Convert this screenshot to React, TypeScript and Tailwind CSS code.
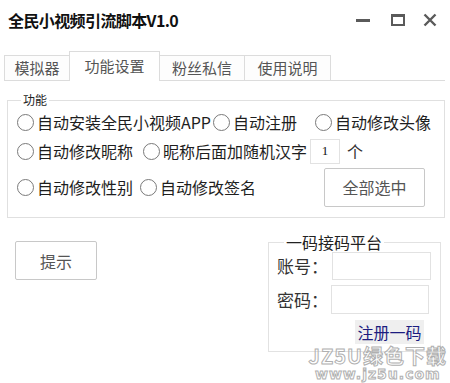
import type { ReactNode } from 'react'

const font = "font-['Noto_Sans_CJK_SC','Microsoft_YaHei',sans-serif]"

function Radio({ label, className = '' }: { label: string; className?: string }) {
  return (
    <label className={`flex items-center shrink-0 ${className}`}>
      <span className="w-[17px] h-[17px] rounded-full border border-[#7a7a7a] bg-white shrink-0" />
      <span className="ml-[3px] text-[16px] leading-[20px] text-[#1e1e1e] whitespace-nowrap">{label}</span>
    </label>
  )
}

function Row({ children, className = '' }: { children: ReactNode; className?: string }) {
  return <div className={`flex items-center ${className}`}>{children}</div>
}

const tabs = [
  { name: '模拟器', w: 'w-[66px]' },
  { name: '功能设置', w: 'w-[91px]' },
  { name: '粉丝私信', w: 'w-[86px]' },
  { name: '使用说明', w: 'w-[87px]' },
]

export default function App() {
  return (
    <div className={`relative w-[450px] h-[383px] bg-white overflow-hidden ${font}`}>
      {/* title bar */}
      <div className="flex items-center h-[40px] pl-[8px]">
        <span className="text-[16px] font-bold text-[#111] tracking-[-0.6px]">全民小视频引流脚本V1.0</span>
        <div className="ml-auto flex items-center">
          <span className="w-[14px] h-[3px] bg-[#5a5a5a]" />
          <span className="ml-[21px] w-[14px] h-[12px] border-2 border-t-[3px] border-[#5a5a5a]" />
          <svg className="ml-[18px] mr-[13px]" width="14" height="14" viewBox="0 0 14 14">
            <path d="M1.5 1.5l11 11M12.5 1.5l-11 11" stroke="#5a5a5a" strokeWidth="2.4" />
          </svg>
        </div>
      </div>

      {/* tabs */}
      <div className="mt-[12px] ml-[4px] mr-[5px] flex items-end h-[29px] border-b border-[#dcdcdc]">
        {tabs.map((t, i) => (
          <div
            key={t.name}
            className={`${t.w} flex items-center justify-center border border-b-0 border-[#dcdcdc] text-[15px] text-[#555] ${
              i === 1 ? 'h-[30px] -mb-px bg-white' : 'h-[25px] bg-[#fdfdfd]'
            } ${i > 0 ? '-ml-px' : ''}`}
          >
            {t.name}
          </div>
        ))}
      </div>

      {/* 功能 group */}
      <fieldset className="mt-[11px] ml-[7px] mr-[5px] border border-[#e0e0e0] pb-[10px]">
        <legend className="ml-[13px] px-[2px] text-[12px] leading-[16px] text-[#222]">功能</legend>
        <Row className="h-[26px] mt-px pl-[9px]">
          <Radio label="自动安装全民小视频APP" className="w-[196px]" />
          <Radio label="自动注册" className="w-[102px]" />
          <Radio label="自动修改头像" />
        </Row>
        <Row className="h-[26px] mt-[3px] pl-[9px]">
          <Radio label="自动修改昵称" className="w-[126px]" />
          <Radio label="昵称后面加随机汉字" />
          <span className="ml-[3px] w-[30px] h-[25px] border border-[#e2e2e2] flex items-center justify-center text-[13px] text-[#111] font-['Liberation_Serif',serif]">
            1
          </span>
          <span className="ml-[7px] text-[16px] text-[#333]">个</span>
        </Row>
        <Row className="h-[40px] mt-[3px] pl-[9px]">
          <Radio label="自动修改性别" className="w-[123px]" />
          <Radio label="自动修改签名" className="w-[184px]" />
          <button className="w-[101px] h-[39px] border border-[#c8c8c8] rounded-[2px] bg-white text-[16px] text-[#555]">
            全部选中
          </button>
        </Row>
      </fieldset>

      {/* bottom area */}
      <div className="flex items-start pl-[15px] pr-[9px]">
        <button className="mt-[23px] w-[82px] h-[39px] border border-[#c8c8c8] rounded-[2px] bg-white text-[16px] text-[#555]">
          提示
        </button>
        <fieldset className="ml-auto mt-[14px] w-[173px] border border-[#e2e2e2] pb-[7px]">
          <legend className="ml-[15px] px-[2px] text-[16px] leading-[20px] text-[#222]">一码接码平台</legend>
          <div className="flex items-center pl-[8px]">
            <span className="w-[55px] text-[17px] text-[#333]">账号：</span>
            <span className="w-[99px] h-[28px] border border-[#e2e2e2] bg-white" />
          </div>
          <div className="flex items-center pl-[8px] mt-[5px]">
            <span className="w-[54px] text-[17px] text-[#333]">密码：</span>
            <span className="w-[98px] h-[29px] border border-[#e2e2e2] bg-white" />
          </div>
          <div className="flex justify-end pr-[16px] mt-[6px]">
            <button className="w-[69px] h-[24px] leading-[24px] bg-[#efefef] text-[16px] text-[#1c1c80]">注册一码</button>
          </div>
        </fieldset>
      </div>

      {/* watermark */}
      <div className="absolute right-[3px] bottom-[1px] flex flex-col items-center gap-[1px] font-['DejaVu_Sans',sans-serif] text-transparent [-webkit-text-stroke:1px_#b0b0b0] pointer-events-none">
        <span className={`text-[20px] leading-[21px] font-bold tracking-[1px] ${font}`}>JZ5U绿色下载</span>
        <span className="text-[14px] leading-[15px] font-bold tracking-[1px]">www.jz5u.com</span>
      </div>
    </div>
  )
}
